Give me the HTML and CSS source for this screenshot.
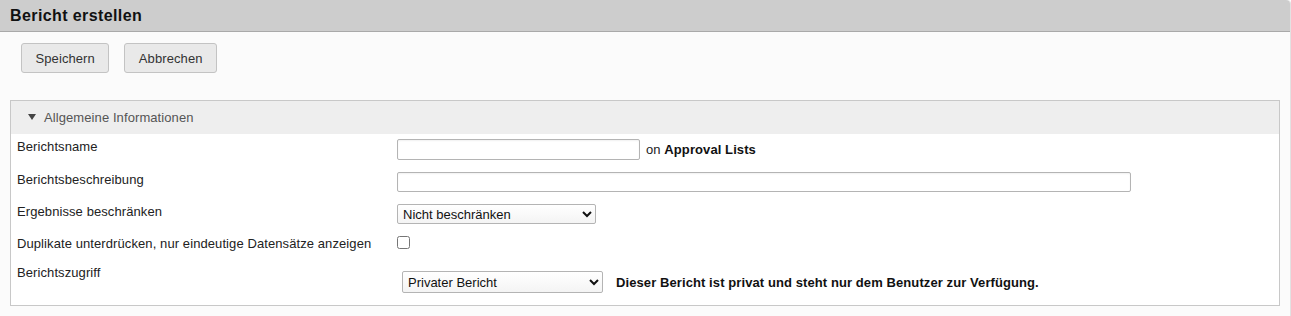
FILE: index.html
```html
<!DOCTYPE html>
<html lang="de">
<head>
  <meta charset="UTF-8">
  <title>Bericht erstellen</title>
  <link rel="stylesheet" href="styles.css">
</head>
<body>
  <div class="panel">
    <div class="panel-title">
      <h2>Bericht erstellen</h2>
    </div>

    <div class="panel-body">
      <div class="toolbar">
        <button type="button">Speichern</button>
        <button type="button">Abbrechen</button>
      </div>

      <div class="section">
        <div class="section-head">
          <span class="caret"></span>
          Allgemeine Informationen
        </div>

        <div class="section-body">
          <div class="field">
            <label for="name">Berichtsname</label>
            <div class="control">
              <input type="text" id="name" class="input-name">
              <span class="hint">on <b>Approval Lists</b></span>
            </div>
          </div>

          <div class="field">
            <label for="desc">Berichtsbeschreibung</label>
            <div class="control">
              <input type="text" id="desc" class="input-desc">
            </div>
          </div>

          <div class="field">
            <label for="limit">Ergebnisse beschränken</label>
            <div class="control">
              <select id="limit" class="select-limit">
                <option>Nicht beschränken</option>
              </select>
            </div>
          </div>

          <div class="field">
            <label for="unique">Duplikate unterdrücken, nur eindeutige Datensätze anzeigen</label>
            <div class="control">
              <input type="checkbox" id="unique">
            </div>
          </div>

          <div class="field">
            <label for="access">Berichtszugriff</label>
            <div class="control control-access">
              <select id="access" class="select-access">
                <option>Privater Bericht</option>
              </select>
              <b class="access-note">Dieser Bericht ist privat und steht nur dem Benutzer zur Verfügung.</b>
            </div>
          </div>
        </div>
      </div>
    </div>
  </div>
</body>
</html>
```

FILE: styles.css
```css
:root {
  --text: #222;
  --border: #c8c8c8;
  --field-border: #b4b4b4;
  --title-bg: #cdcdcd;
  --body-bg: #fbfbfb;
  --head-bg: #eeeeee;
}

* {
  margin: 0;
  padding: 0;
  box-sizing: border-box;
}

body {
  font-family: "Liberation Sans", Arial, sans-serif;
  font-size: 13px;
  line-height: 15px;
  letter-spacing: 0.09px;
  color: var(--text);
  background: #fff;
}

.panel {
  width: 1291px;
  min-height: 316px;
  background: var(--body-bg);
  border-right: 1px solid #e2e2e2;
  border-top-right-radius: 4px;
}

.panel-title {
  height: 32px;
  padding: 0 10px;
  background: var(--title-bg);
  border-bottom: 1px solid #a9a9a9;
  border-top-right-radius: 4px;
}

.panel-title h2 {
  font-size: 16px;
  line-height: 31px;
  letter-spacing: 0.4px;
  font-weight: bold;
  color: #111;
}

.panel-body {
  padding: 11px 10px 10px;
}

.toolbar {
  display: flex;
  gap: 15px;
  padding-left: 11px;
}

button {
  height: 30px;
  padding: 0 13.5px;
  font-family: inherit;
  font-size: 13px;
  letter-spacing: inherit;
  color: #333;
  background: #e9e9e9;
  border: 1px solid #c3c3c3;
  border-radius: 3px;
  cursor: pointer;
}

.section {
  margin-top: 27px;
  width: 1270px;
  border: 1px solid var(--border);
  background: #fff;
}

.section-head {
  display: flex;
  align-items: center;
  height: 33px;
  padding-left: 17px;
  background: var(--head-bg);
  color: #555;
}

.caret {
  width: 0;
  height: 0;
  margin: -2px 8px 0 0;
  border-left: 4.5px solid transparent;
  border-right: 4.5px solid transparent;
  border-top: 6px solid #444;
}

.section-body {
  padding-bottom: 5px;
}

.field {
  display: flex;
  align-items: flex-start;
  padding: 5px 6px 7px;
}

.field label {
  flex: 0 0 380px;
}

.control {
  display: flex;
  align-items: center;
  gap: 6px;
}

input[type="text"] {
  height: 21px;
  padding: 0 4px;
  font-family: inherit;
  font-size: 13px;
  background: #fff;
  border: 1px solid var(--field-border);
  border-radius: 2px;
  box-shadow: inset 0 1px 2px rgba(0, 0, 0, 0.06);
}

.input-name {
  width: 243px;
}

.input-desc {
  width: 734px;
  height: 20px !important;
}

select {
  height: 20px;
  padding: 0 1px;
  font-family: inherit;
  font-size: 13px;
  color: #111;
  background: linear-gradient(#ffffff, #f4f4f4);
  border: 1px solid var(--field-border);
  border-radius: 2px;
}

.select-limit {
  width: 199px;
}

input[type="checkbox"] {
  width: 13px;
  height: 13px;
  margin: 0 0 4px;
}

.control-access {
  gap: 13px;
  margin: 6px 0 0 5px;
}

.select-access {
  width: 201px;
  height: 22px;
}

.access-note {
  color: #111;
}

.hint b {
  color: #111;
}
```
